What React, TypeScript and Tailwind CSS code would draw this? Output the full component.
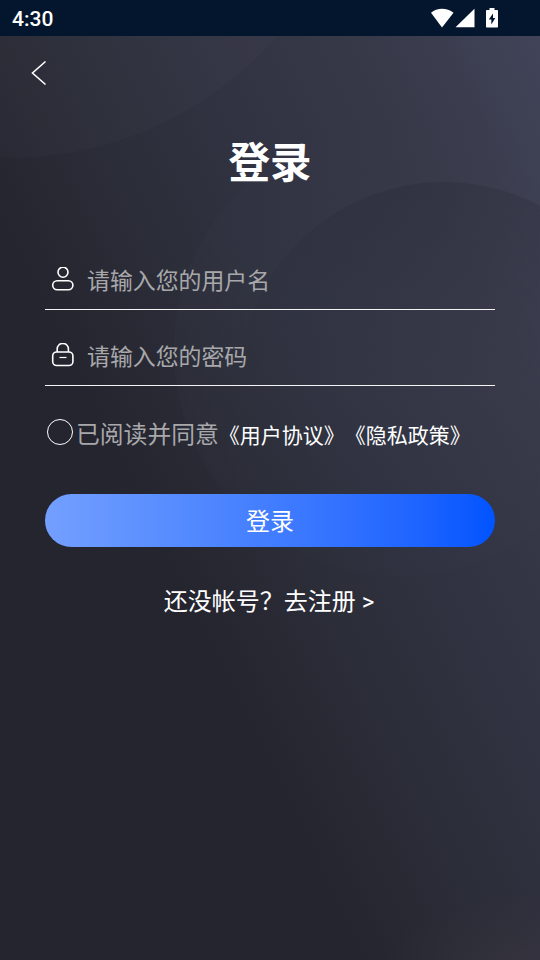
import { useState } from 'react'

function StatusBar() {
  return (
    <div className="relative h-9 shrink-0 bg-[#03162d] pl-3 pr-[42px] flex items-center justify-between text-white">
      <span className="text-[21px] leading-9 font-medium pt-0.5">4:30</span>
      <svg className="w-[68px] h-5" viewBox="0 0 68 20" fill="currentColor">
        <path d="M12 19.5 1 4.8C4 2 8 .7 12 .7S20.500 2 23.500 4.800z" />
        <path d="M25.500 19.300h19V.7z" />
        <path fillRule="evenodd" d="M59.500 0h5v2H67c.6 0 1 .4 1 1v15.500c0 .6-.4 1-1 1H57c-.6 0-1-.4-1-1V3c0-.6.4-1 1-1h2.500zM63 5.500l-4.200 6h2.500V16.500l4-6.500H63z" />
      </svg>
    </div>
  )
}

function Backdrop() {
  return (
    <svg className="absolute inset-0 w-full h-full" viewBox="0 0 540 960" preserveAspectRatio="none">
      <defs>
        <linearGradient id="inner" x1="0" y1="0" x2="0" y2="1">
          <stop offset="0" stopColor="#20222c" stopOpacity="0.22" />
          <stop offset="0.5" stopColor="#20222c" stopOpacity="0" />
        </linearGradient>
        <linearGradient id="outer" x1="0" y1="0" x2="0" y2="1">
          <stop offset="0" stopColor="#7387a0" stopOpacity="0" />
          <stop offset="0.4" stopColor="#7387a0" stopOpacity="0.035" />
          <stop offset="1" stopColor="#7387a0" stopOpacity="0.01" />
        </linearGradient>
        <radialGradient id="corner">
          <stop offset="0" stopColor="#3e3843" stopOpacity="0.5" />
          <stop offset="1" stopColor="#3e3843" stopOpacity="0" />
        </radialGradient>
      </defs>
      <circle cx="10" cy="-195" r="353" fill="#7387a0" fillOpacity="0.04" />
      <circle cx="400" cy="350" r="226" fill="url(#outer)" />
      <circle cx="444" cy="388" r="206" fill="url(#inner)" />
      <ellipse cx="540" cy="970" rx="160" ry="75" fill="url(#corner)" />
    </svg>
  )
}

function UserIcon() {
  return (
    <svg className="w-6 h-6" viewBox="0 0 24 24" fill="none" stroke="currentColor" strokeWidth="1.6">
      <circle cx="12" cy="5.200" r="5" />
      <rect x="1.700" y="13.700" width="20.200" height="9.100" rx="4.500" />
    </svg>
  )
}

function LockIcon() {
  return (
    <svg className="w-6 h-6" viewBox="0 0 24 24" fill="none" stroke="currentColor" strokeWidth="1.6">
      <path d="M6.200 9V6a5.600 5.600 0 0 1 11.200 0v3" />
      <rect x="1.700" y="9" width="20.200" height="13.500" rx="4" />
      <path d="M8.500 14.500h7" strokeWidth="1.2" />
    </svg>
  )
}

export default function App() {
  const [username, setUsername] = useState('')
  const [password, setPassword] = useState('')
  const [agreed, setAgreed] = useState(false)

  return (
    <div className="relative w-full h-[960px] overflow-hidden flex flex-col text-white font-[Roboto,'Noto_Sans_CJK_SC',sans-serif] bg-[linear-gradient(64deg,#25252f_0%,#25252f_36%,#2b2d38_50%,#313342_64%,#373848_80%,#42455a_100%)]">
      <Backdrop />
      <StatusBar />

      <main className="relative flex-1 flex flex-col px-[45px]">
        <button className="absolute left-[30px] top-6 w-[18px] h-[26px]" aria-label="返回">
          <svg className="w-[18px] h-[26px]" viewBox="0 0 18 26" fill="none" stroke="currentColor" strokeWidth="1.6">
            <path d="M15.500 1.500 2.500 13l13 11.500" />
          </svg>
        </button>

        <h1 className="mt-[98px] text-center text-[41.500px] leading-[60px] font-bold">登录</h1>

        <div className="mt-[39px] h-[77px] border-b border-white/95 flex items-end pb-[11px]">
          <span className="ml-1.5 mb-[7px]"><UserIcon /></span>
          <input value={username} onChange={e => setUsername(e.target.value)} placeholder="请输入您的用户名"
            className="ml-3 w-[380px] h-8 bg-transparent text-[22.900px] outline-none placeholder:text-[#a8a8ab]" />
        </div>
        <div className="h-[76px] border-b border-white/95 flex items-end pb-[11px]">
          <span className="ml-1.5 mb-[7px]"><LockIcon /></span>
          <input type="password" value={password} onChange={e => setPassword(e.target.value)} placeholder="请输入您的密码"
            className="ml-3 w-[380px] h-8 bg-transparent text-[22.900px] outline-none placeholder:text-[#a8a8ab]" />
        </div>

        <div className="mt-[28px] h-9 flex items-center whitespace-nowrap [text-spacing-trim:space-all]">
          <button onClick={() => setAgreed(!agreed)} aria-label="同意"
            className={`ml-0.5 w-[26px] h-[26px] shrink-0 rounded-full border-[1.500px] border-white ${agreed ? 'bg-[#0054ff]' : ''}`} />
          <span className="ml-[3px] pt-2 text-[23.800px] text-[#a8a8ab]">已阅读并同意</span>
          <span className="pt-[9px] text-[21px]">《用户协议》《隐私政策》</span>
        </div>

        <button className="mt-[44px] h-[53px] pt-[3px] shrink-0 rounded-full text-2xl bg-linear-to-r from-[#739fff] to-[#0054ff]">登录</button>

        <a href="#" className="mt-[37px] -ml-px pr-px text-center text-2xl leading-9">还没帐号？去注册 &gt;</a>
      </main>
    </div>
  )
}
